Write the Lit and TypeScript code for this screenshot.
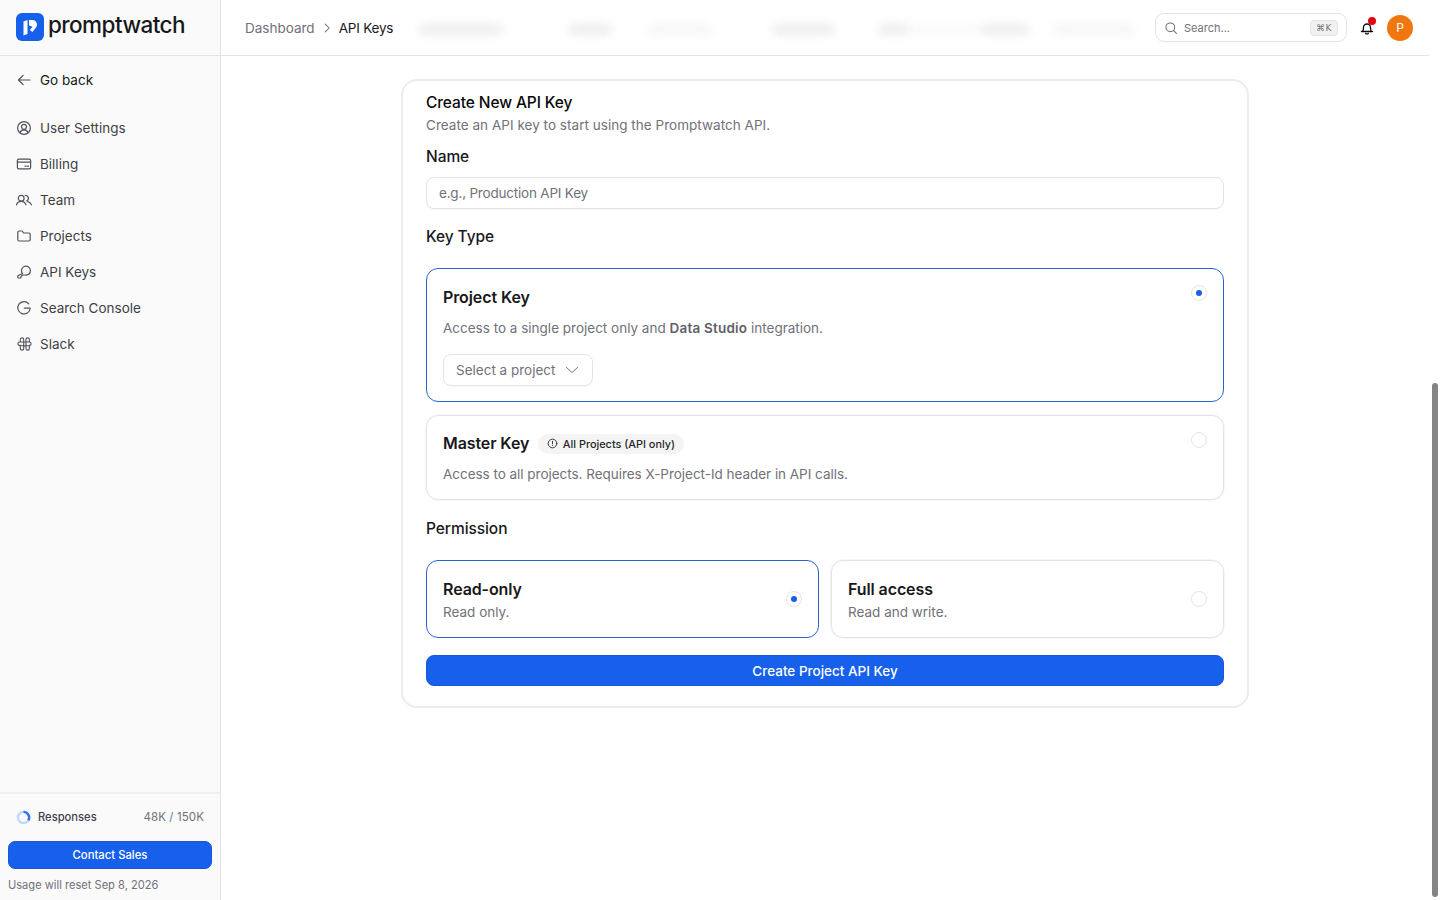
import { LitElement, html, css, svg } from "lit";
import { customElement } from "lit/decorators.js";

const ic = (body: unknown, size = 16, sw = 1.2) => html`<svg width=${size} height=${size} viewBox="0 0 16 16" fill="none" stroke="currentColor" stroke-width=${sw} stroke-linecap="round" stroke-linejoin="round">${body}</svg>`;

const icons: Record<string, unknown> = {
  back: svg`<path d="M14 8H2.500M7 3.500 2.500 8 7 12.500"/>`,
  user: svg`<circle cx="8" cy="8" r="6.400"/><circle cx="8" cy="6.800" r="2.500"/><path d="M3.900 12.800c.7-1.700 2.200-2.900 4.100-2.900s3.400 1.200 4.100 2.900"/>`,
  card: svg`<rect x="1.400" y="3.200" width="13.200" height="9.600" rx="1.400"/><path d="M1.400 6.200h13.200M9 10.200h1.200M11.600 10.200h1"/>`,
  team: svg`<circle cx="5.200" cy="6.200" r="2.900"/><path d="M.5 12.800c.5-2 2.400-3.500 4.700-3.500s4.200 1.500 4.700 3.500"/><path d="M9.300 3.400a2.900 2.900 0 0 1 1.500 5.500M11.800 9.600c1.800.5 3.100 1.700 3.700 3.200"/>`,
  folder: svg`<path d="M1.800 4.200c0-.7.5-1.200 1.200-1.200h3l1.600 2H13c.7 0 1.200.5 1.200 1.200v5.600c0 .7-.5 1.200-1.200 1.200H3c-.7 0-1.200-.5-1.200-1.200z"/>`,
  key: svg`<path d="M6.500 9.500A4.500 4.500 0 1 1 9 11L6.500 11 5 12.500 4.800 14H2.300L1.800 13.600V11.800z"/>`,
  google: svg`<path d="M12.800 3.800A6.200 6.200 0 1 0 14.200 8.200H8.300"/>`,
  slack: svg`<path d="M6 1.900a1.700 1.700 0 0 1 1.700 1.700V6H10V3.600a1.700 1.700 0 0 1 3.400 0M6 1.900a1.700 1.700 0 0 0-1.700 1.700V6H3.600a1.700 1.700 0 0 0 0 3.400h.7v3a1.700 1.700 0 0 0 3.400 0V10H10v2.400a1.700 1.700 0 0 0 3.400 0V9.400a1.700 1.700 0 0 0 0-3.400V3.600M4.300 6h9.100M3.600 9.700h9.800M7.700 6v4M10 6v4" stroke-width="1.100"/>`,
};

const nav = [
  ["user", "User Settings"],
  ["card", "Billing"],
  ["team", "Team"],
  ["folder", "Projects"],
  ["key", "API Keys"],
  ["google", "Search Console"],
  ["slack", "Slack"],
];

const blobs: [number, number, number][] = [
  [418, 85, .8],
  [568, 44, .8],
  [648, 64, .4],
  [772, 63, .8],
  [878, 32, .8],
  [910, 70, .25],
  [980, 50, .8],
  [1052, 83, .4],
];

@customElement("app-root")
export class AppRoot extends LitElement {
  static styles = css`
    :host { display: block; height: 900px; overflow: hidden; position: relative; background: #fff; font-family: Inter, "Liberation Sans", sans-serif; color: #09090b; font-size: 13.5px; }
    * { box-sizing: border-box; }
    .shell { display: flex; height: 900px; }
    .side { width: 221px; flex: none; background: #fafafa; border-right: 1px solid #e4e4e7; display: flex; flex-direction: column; }
    .brand { height: 56px; border-bottom: 1px solid #e4e4e7; display: flex; align-items: center; gap: 4px; padding: 0 0 2px 16px; }
    .word { font-size: 22.5px; font-weight: 500; letter-spacing: -0.55px; color: #18181b; line-height: 26px; padding-bottom: 3px; }
    .navlist { flex: 1; padding: 6px 0 0; display: flex; flex-direction: column; }
    .item { height: 36px; display: flex; align-items: center; gap: 8px; padding-left: 16px; color: #3f3f46; line-height: 20px; }
    .item svg { color: #52525b; flex: none; }
    .item.back { color: #18181b; margin-bottom: 12px; }
    .foot { height: 108px; border-top: 2px solid #f0f0f1; padding: 15px 8px 0; display: flex; flex-direction: column; }
    .usage { height: 16px; display: flex; align-items: center; justify-content: space-between; padding: 0 8px; font-size: 11.2px; }
    .usage .l { display: flex; align-items: center; gap: 7px; color: #3f3f50; font-weight: 500; }
    .usage .r { color: #71717a; font-size: 11.500px; letter-spacing: .1px; }
    .cta { margin-top: 16px; height: 28px; border-radius: 7px; background: #1660ec; border: 1px solid #1a56d6; color: #fff; display: flex; align-items: center; justify-content: center; font-size: 11.300px; font-weight: 450; }
    .reset { margin-top: 9px; font-size: 11.100px; color: #71717a; line-height: 14px; }
    .right { width: 1208px; flex: none; display: flex; flex-direction: column; }
    .top { height: 56px; flex: none; border-bottom: 1px solid #e4e4e7; display: flex; align-items: center; padding: 0 16px 0 24px; position: relative; overflow: hidden; }
    .crumbs { display: flex; align-items: center; gap: 5px; color: #71717a; line-height: 20px; }
    .crumbs b { font-weight: 400; color: #18181b; letter-spacing: -.2px; }
    .crumbs svg { color: #71717a; }
    .blob { position: absolute; top: 24px; height: 11px; border-radius: 6px; background: #e9e9eb; filter: blur(5px); }
    .tools { margin-left: auto; display: flex; align-items: center; }
    .search { width: 192px; height: 29px; border: 1px solid #e4e4e7; border-radius: 9px; display: flex; align-items: center; padding: 0 8px 0 8px; gap: 6px; color: #71717a; font-size: 11px; background: #fff; }
    .search svg { color: #71717a; }
    .kbd { margin-left: auto; height: 16px; width: 28px; border-radius: 4px; background: #f1f1f2; border: 1px solid #e4e4e7; font-size: 9px; display: flex; align-items: center; justify-content: center; letter-spacing: .5px; color: #71717a; font-family: "DejaVu Sans", Inter, sans-serif; }
    .bell { position: relative; width: 16px; height: 16px; margin-left: 12px; color: #09090b; }
    .bell svg { display: block; }
    .dot { position: absolute; top: -3px; right: -1px; width: 8px; height: 8px; background: #e7000b; border-radius: 50%; }
    .ava { width: 26px; height: 26px; border-radius: 50%; background: #f0760f; color: #fff; font-size: 12px; display: flex; align-items: center; justify-content: center; margin-left: 12px; }
    .main { flex: 1; padding-top: 23px; display: flex; justify-content: center; align-items: flex-start; }
    .panel { width: 848px; height: 629px; border: 2px solid #ececee; border-radius: 16px; padding: 11px 23px 0; display: flex; flex-direction: column; }
    h2 { margin: 0; font-size: 15.500px; font-weight: 500; line-height: 22px; letter-spacing: -0.1px; }
    .sub { color: #71717a; line-height: 20px; margin-top: 1px; letter-spacing: .03px; }
    .label { font-size: 15.500px; line-height: 20px; color: #18181b; font-weight: 450; letter-spacing: -.07px; }
    .input { height: 32px; border: 1px solid #e4e4e7; border-radius: 8px; display: flex; align-items: center; padding: 0 12px; color: #71717a; margin-top: 10px; box-shadow: 0 1px 1px rgba(0,0,0,.03); letter-spacing: -.2px; }
    .opt { border: 1px solid #e4e4e7; border-radius: 12px; position: relative; padding: 0 16px; box-shadow: 0 0 0 .5px #eee; }
    .opt.on { border: 1.500px solid #2a62d4; box-shadow: none; }
    .opt h3 { margin: 0; font-size: 16px; font-weight: 600; line-height: 22px; letter-spacing: -.1px; color: #18181b; display: flex; align-items: center; gap: 9px; }
    .opt p { margin: 0; color: #71717a; line-height: 20px; }
    .opt p strong { font-weight: 600; color: #5f5f68; letter-spacing: .2px; }
    .radio { position: absolute; width: 16px; height: 16px; border-radius: 50%; border: 1px solid #e4e4e7; background: #fff; display: flex; align-items: center; justify-content: center; }
    .radio i { width: 6px; height: 6px; border-radius: 50%; background: #1660ec; display: block; }
    .opt.k1 { margin-top: 21px; height: 134px; padding-top: 17px; }
    .opt.k2 { margin-top: 13px; height: 85px; padding-top: 16px; }
    .opt .radio.tr { top: 16px; right: 16px; }
    .select { margin-top: 16px; width: 150px; height: 32px; border: 1px solid #e4e4e7; border-radius: 8px; display: flex; align-items: center; gap: 9px; padding-left: 12px; color: #71717a; box-shadow: 0 1px 1px rgba(0,0,0,.03); }
    .k1 p, .k2 p { margin-top: 10px; }
    .k2 p { letter-spacing: -.03px; }
    .pill { height: 20px; margin-top: 1px; padding: 0 9px; border-radius: 10px; background: #f4f4f5; font-size: 10.900px; font-weight: 500; display: inline-flex; align-items: center; gap: 4.500px; color: #27272a; letter-spacing: 0; }
    .perms { display: grid; grid-template-columns: 1fr 1fr; gap: 12px; margin-top: 21px; }
    .perm { height: 78px; padding-top: 17px; }
    .perm p { margin-top: 2px; }
    .perm .radio { top: 30px; right: 16px; }
    .go { margin-top: 17px; height: 31px; border-radius: 8px; background: #1660ec; border: 1px solid #1a56d6; color: #fff; font-weight: 500; display: flex; align-items: center; justify-content: center; }
    .thumb { position: absolute; left: 1432px; top: 383px; width: 6px; height: 514px; border-radius: 3px; background: #858585; }
  `;

  render() {
    return html`<div class="shell">
      <aside class="side">
        <div class="brand">
          <svg width="28" height="28" viewBox="0 0 28 28"><rect width="28" height="28" rx="6" fill="#1660ec"/><path d="M7.500 8.500 11.500 7v14l-4 1.500zM13 7h3.200c2.800 0 4.800 2 4.800 4.500 0 1.200-.4 2.200-1.100 3.100l-3.500 4.400-2.600-2 2.800-3.300-3.600-1.200z" fill="#fff"/></svg>
          <span class="word">promptwatch</span>
        </div>
        <div class="navlist">
          <div class="item back">${ic(icons.back)}<span>Go back</span></div>
          ${nav.map(([i, t]) => html`<div class="item">${ic(icons[i])}<span>${t}</span></div>`)}
        </div>
        <div class="foot">
          <div class="usage">
            <span class="l"><svg width="15" height="15" viewBox="0 0 16 16" fill="none"><circle cx="8" cy="8" r="6" stroke="#bfd7fb" stroke-width="2.600"/><path d="M8 2a6 6 0 0 1 5.200 9" stroke="#2b78ee" stroke-width="2.600"/></svg>Responses</span>
            <span class="r">48K / 150K</span>
          </div>
          <div class="cta">Contact Sales</div>
          <div class="reset">Usage will reset Sep 8, 2026</div>
        </div>
      </aside>
      <div class="right">
        <header class="top">
          ${blobs.map(([x, w, o]) => html`<span class="blob" style="left:${x - 221}px;width:${w}px;opacity:${o}"></span>`)}
          <div class="crumbs"><span>Dashboard</span>${ic(svg`<path d="M6 3.500 10.500 8 6 12.500"/>`, 14)}<b>API Keys</b></div>
          <div class="tools">
            <div class="search">${ic(svg`<circle cx="7.200" cy="7.200" r="5"/><path d="m11 11 3.200 3.200"/>`, 14)}<span>Search...</span><span class="kbd">⌘K</span></div>
            <div class="bell">${ic(svg`<path d="M3.500 11.500c.8-1 1-2 1-4a3.500 3.500 0 0 1 7 0c0 2 .2 3 1 4zM2.500 11.500h11M6.700 13.500c.6.600 2 .6 2.600 0"/>`, 16, 1.300)}<span class="dot"></span></div>
            <div class="ava">P</div>
          </div>
        </header>
        <main class="main">
          <section class="panel">
            <h2>Create New API Key</h2>
            <div class="sub">Create an API key to start using the Promptwatch API.</div>
            <div class="label" style="margin-top:12px">Name</div>
            <div class="input">e.g., Production API Key</div>
            <div class="label" style="margin-top:18px">Key Type</div>
            <div class="opt on k1">
              <h3>Project Key</h3>
              <p>Access to a single project only and <strong>Data Studio</strong> integration.</p>
              <div class="select">Select a project ${ic(svg`<path d="m2.500 5.500 5.500 5 5.500-5"/>`, 16, 1)}</div>
              <span class="radio tr"><i></i></span>
            </div>
            <div class="opt k2">
              <h3>Master Key <span class="pill">${ic(svg`<circle cx="8" cy="8" r="6.300"/><path d="M8 4.800v3.700M8 11v.1"/>`, 11, 1.300)}All Projects (API only)</span></h3>
              <p>Access to all projects. Requires X-Project-Id header in API calls.</p>
              <span class="radio tr"></span>
            </div>
            <div class="label" style="margin-top:19px">Permission</div>
            <div class="perms">
              <div class="opt on perm"><h3>Read-only</h3><p>Read only.</p><span class="radio"><i></i></span></div>
              <div class="opt perm"><h3>Full access</h3><p>Read and write.</p><span class="radio"></span></div>
            </div>
            <div class="go">Create Project API Key</div>
          </section>
        </main>
      </div>
    </div>
    <div class="thumb"></div>`;
  }
}
